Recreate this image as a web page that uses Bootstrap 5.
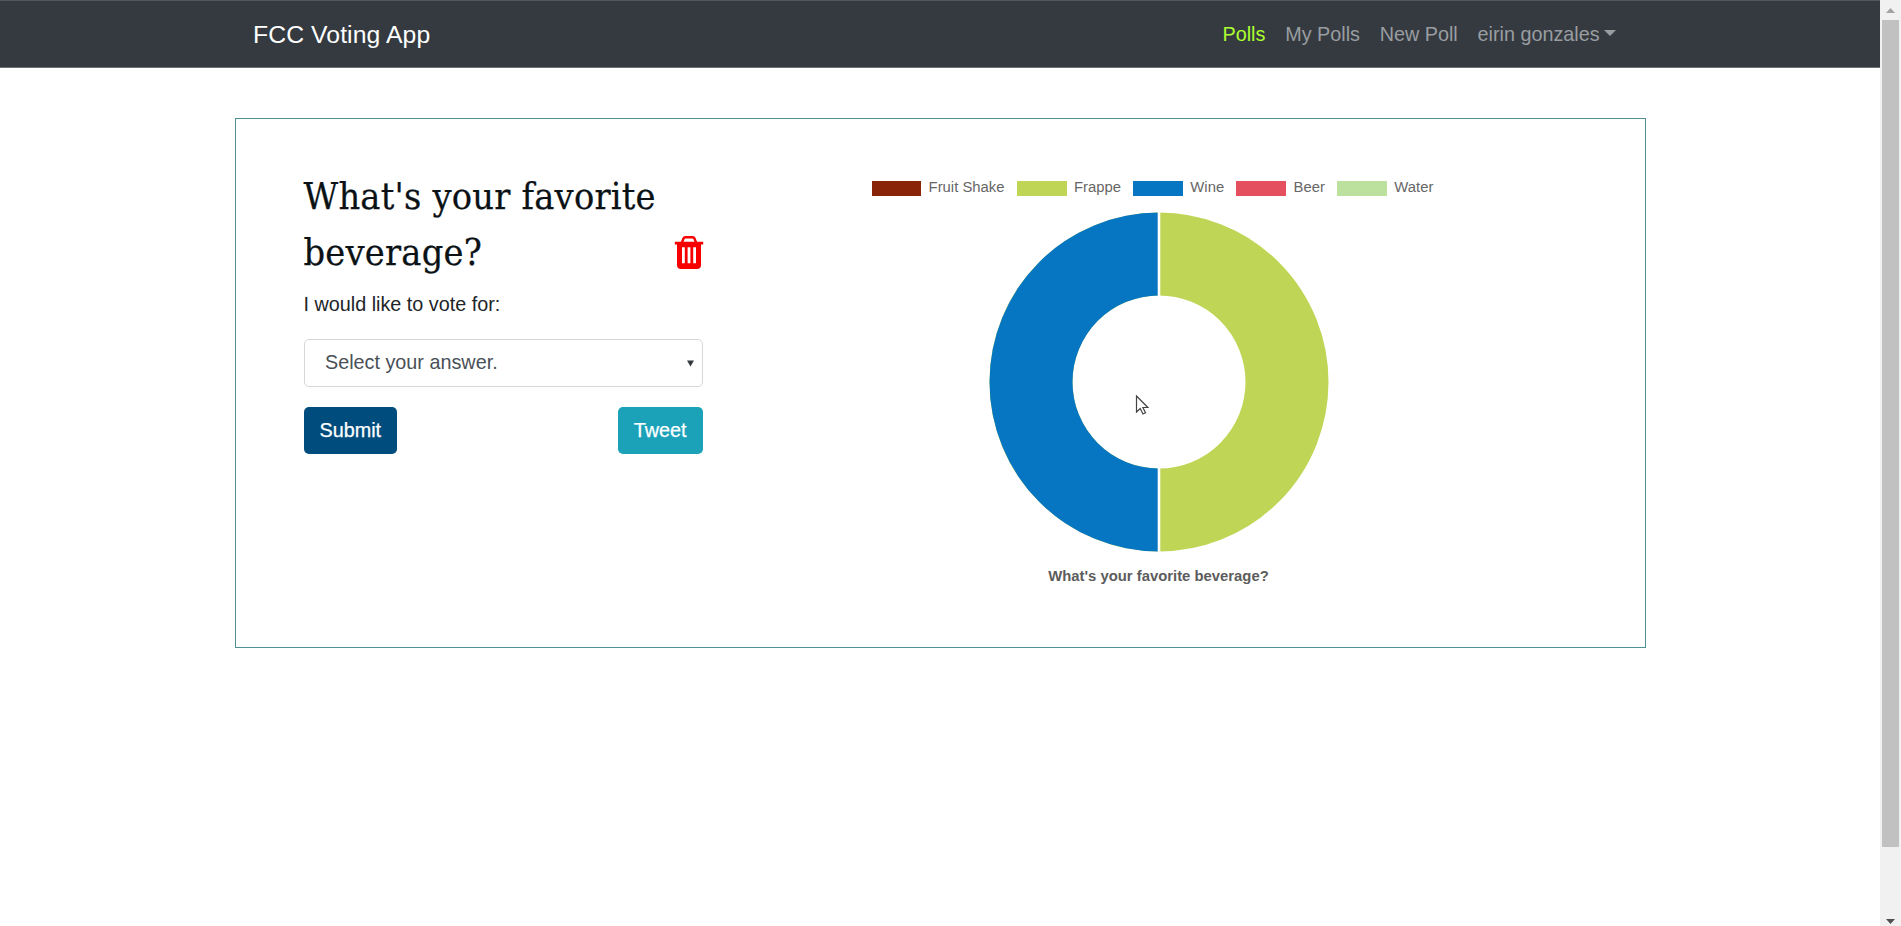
<!DOCTYPE html>
<html lang="en">
<head>
<meta charset="utf-8">
<meta name="viewport" content="width=device-width, initial-scale=1">
<title>FCC Voting App</title>
<link href="https://cdn.jsdelivr.net/npm/bootstrap@5.3.0/dist/css/bootstrap.min.css" rel="stylesheet">
<style>
html{font-size:19.8px}
body{font-family:"Liberation Sans",Arial,sans-serif;color:#212529;height:926px;overflow:hidden}
.page{width:1880px}
.topbar{height:68px;background:#343a40;border-top:1px solid #51585c;border-bottom:1px solid #6b6f73;padding:1px 0 0}
.wrap{width:1411px;max-width:none}
.topbar .wrap{padding:0 19.5px 0 18.5px}
.topbar .navbar-brand{font-size:24.75px;letter-spacing:.08px;color:#fff;margin:0}
.topbar .nav-link{color:#9a9da0;padding:1px 9.9px 0;font-size:19.8px}
.topbar .nav-link.active{color:#adff2f}
.topbar .dropdown-toggle::after{margin-left:4.5px;vertical-align:5px;border-top-width:6px;border-left-width:6px;border-right-width:6px}
.poll{border:1px solid #4f9095;margin-top:50px;height:530px;padding:0 0 0 68px}
.vote{width:399px;padding-top:50px}
.vote h1{font:400 37.5px/55.5px "DejaVu Serif Condensed","DejaVu Serif",serif;font-stretch:condensed;color:#0b1216;letter-spacing:.23px;-webkit-text-stroke:.25px #0b1216;white-space:nowrap}
.trash{margin:0 -1px 10px -40px}
.prompt{line-height:30px;margin:9px 0 20px}
.answer{height:48px;border:1px solid #d5d8db;border-radius:5px;padding:0 8px 0 20.5px;color:#495057}
.poll .btn{height:47px;padding:1px 16px 0;font-size:19.8px;border-radius:5px;border:0;color:#fff;-webkit-text-stroke:.25px #fff}
.btn-vote{background:#004c7c}
.btn-share{background:#1ba2b9}
.chart{width:574px;margin-left:169px;padding-top:58px;font-size:14.85px;color:#666}
.legend-row{gap:12.3px;height:20px}
.swatch{width:49.800px;height:15px;margin:2px 7.3px 0 0}
.donut{margin-top:14.500px}
.chart-name{font-weight:700;line-height:20px;margin-top:14px;color:#5c5c5c}
.pointer{left:1135px;top:394px}
.scroller{width:21px;height:926px;background:#f1f1f1}
.thumb{width:17px;height:827px;background:#c1c1c1}
</style>
<script src="https://cdn.jsdelivr.net/npm/bootstrap@5.3.0/dist/js/bootstrap.bundle.min.js" defer></script>
</head>
<body class="d-flex bg-white">
<div class="page">
  <nav class="topbar navbar navbar-expand">
    <div class="wrap mx-auto d-flex justify-content-between align-items-center">
      <a class="navbar-brand p-0" href="#">FCC Voting App</a>
      <div class="navbar-nav">
        <a class="nav-link active" href="#">Polls</a>
        <a class="nav-link" href="#">My Polls</a>
        <a class="nav-link" href="#">New Poll</a>
        <a class="nav-link dropdown-toggle" href="#">eirin gonzales</a>
      </div>
    </div>
  </nav>
  <main class="wrap poll mx-auto d-flex">
    <section class="vote">
      <div class="d-flex justify-content-between align-items-end">
        <h1 class="m-0">What's your favorite<br>beverage?</h1>
        <svg class="trash flex-shrink-0" width="30" height="34" viewBox="0 0 30 34"><path d="M8 6.500L9.500 2.500Q10 1.300 11.500 1.300h7q1.500 0 2 1.200L22 6.500" fill="none" stroke="#f60000" stroke-width="2.400"/><path fill="#f60000" fill-rule="evenodd" d="M.8 5.800h28.400v2.700h-2.200V29q0 4-4 4H7q-4 0-4-4V8.500H.8zM8 11.200v16h2.800v-16zm5.600 0v16h2.800v-16zm5.600 0v16H22v-16z"/></svg>
      </div>
      <p class="prompt">I would like to vote for:</p>
      <div class="answer d-flex align-items-center justify-content-between mb-3"><span>Select your answer.</span><svg width="7" height="7" viewBox="0 0 8 7"><path d="M0 0h8L4 7z" fill="#32383d"/></svg></div>
      <div class="d-flex justify-content-between">
        <button class="btn btn-vote">Submit</button>
        <button class="btn btn-share">Tweet</button>
      </div>
    </section>
    <section class="chart d-flex flex-column align-items-center">
      <div class="legend-row d-flex align-items-center align-self-start text-nowrap">
        <div class="d-flex align-items-center"><i class="swatch" style="background:#892409"></i>Fruit Shake</div>
        <div class="d-flex align-items-center"><i class="swatch" style="background:#bfd555"></i>Frappe</div>
        <div class="d-flex align-items-center"><i class="swatch" style="background:#0676c3"></i>Wine</div>
        <div class="d-flex align-items-center"><i class="swatch" style="background:#e5505f"></i>Beer</div>
        <div class="d-flex align-items-center"><i class="swatch" style="background:#bce09d"></i>Water</div>
      </div>
      <svg class="donut flex-shrink-0" width="342" height="340" viewBox="-171 -170 342 340">
        <circle r="128" fill="none" stroke="#bfd555" stroke-width="83"/>
        <path fill="#0676c3" d="M0-169.500A169.500 169.500 0 0 0 0 169.500V86.500A86.500 86.500 0 0 1 0-86.500z"/>
        <path d="M0-170V170" stroke="#fff" stroke-width="2.600"/>
      </svg>
      <div class="chart-name">What's your favorite beverage?</div>
    </section>
  </main>
</div>
<aside class="scroller d-flex flex-column align-items-center flex-shrink-0">
  <svg width="21" height="20" viewBox="0 0 21 20"><path d="M6 13l4.500-5 4.500 5z" fill="#a3a3a3"/></svg>
  <div class="thumb"></div>
  <svg class="mt-auto" width="21" height="12" viewBox="0 0 21 12"><path d="M6 5h9l-4.500 5z" fill="#505050"/></svg>
</aside>
<svg class="pointer position-absolute" width="15" height="22" viewBox="0 0 15 22"><path d="M1.500 2v16l3.700-3.500 2.800 5.500 2.500-1.200-2.600-5.300h5z" fill="#fff" stroke="#444" stroke-width="1.200"/></svg>
</body>
</html>
